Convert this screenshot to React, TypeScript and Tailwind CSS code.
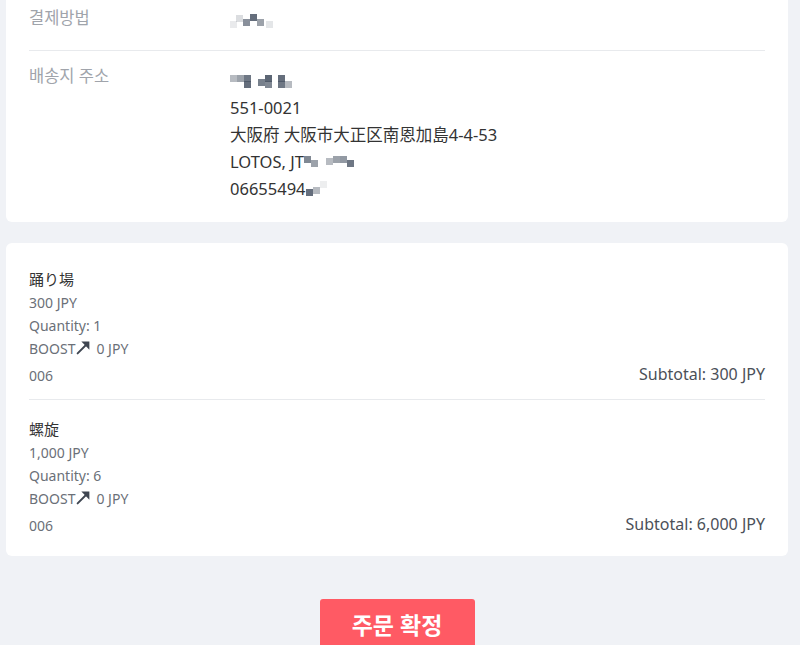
const FONT = { fontFamily: '"Noto Sans", "Noto Sans CJK KR", "Noto Sans CJK JP", sans-serif' }

// pixelated blur blocks, as in the screenshot
function Mosaic({ cells, size = 7 }: { cells: [number, number, number][]; size?: number }) {
  return (
    <span className="relative inline-block align-middle h-[16px]" style={{ width: Math.max(...cells.map((c) => c[0] + size)) }}>
      {cells.map(([x, y, o], i) => (
        <span key={i} className="absolute bg-gray-600" style={{ left: x, top: y, width: size, height: size, opacity: o }} />
      ))}
    </span>
  )
}

function BoostArrow() {
  return (
    <svg width="15" height="15" viewBox="0 0 14 14" className="inline-block ml-[1px] mr-[5px] -mt-[3px]">
      <path d="M1.5 12.5 L10 4" stroke="#3f4651" strokeWidth="1.8" strokeLinecap="round" />
      <path d="M5 1.5 L12.5 1.5 L12.5 9 Z" fill="#3f4651" />
    </svg>
  )
}

const ITEMS = [
  { name: '踊り場', price: '300 JPY', qty: 1, code: '006', subtotal: '300 JPY' },
  { name: '螺旋', price: '1,000 JPY', qty: 6, code: '006', subtotal: '6,000 JPY' },
]

export default function App() {
  return (
    <div className="min-h-[645px] bg-[#f0f2f6] pl-[6px] pr-[12px] text-[#333]" style={FONT}>
      <div className="bg-white rounded-b-md px-[23px] pt-[7px] pb-[20px]">
        <div className="flex pb-[20px] border-b border-[#e8eaed]">
          <div className="w-[201px] shrink-0 text-[16.5px] leading-[22px] text-[#a0a4ab]">결제방법</div>
          <div className="leading-[22px] pt-[1px]">
            <Mosaic cells={[[6, 2, 0.2], [13, 6, 0.65], [20, 1, 0.85], [27, 6, 0.55], [0, 8, 0.12], [36, 8, 0.15]]} />
          </div>
        </div>
        <div className="flex pt-[14px]">
          <div className="w-[201px] shrink-0 text-[16.5px] leading-[22px] text-[#a0a4ab]">배송지 주소</div>
          <div className="text-[16.5px] leading-[27px] text-[#333] pt-[2px]">
            <div className="h-[27px] flex items-center">
              <Mosaic cells={[[0, 2, 0.4], [7, 2, 0.55], [14, 2, 0.8], [14, 8, 0.85], [28, 6, 0.75], [35, 2, 0.9], [35, 8, 0.7], [48, 2, 0.85], [48, 8, 0.8], [55, 8, 0.4]]} />
            </div>
            <div>551-0021</div>
            <div>大阪府 大阪市大正区南恩加島4-4-53</div>
            <div className="flex items-center">
              LOTOS, JT
              <Mosaic cells={[[0, 2, 0.7], [7, 6, 0.55], [22, 4, 0.4], [29, 2, 0.55], [36, 2, 0.6], [43, 6, 0.8]]} />
            </div>
            <div className="flex items-center">
              06655494
              <Mosaic cells={[[0, 8, 0.85], [7, 6, 0.4], [14, 0, 0.1]]} />
            </div>
          </div>
        </div>
      </div>

      <div className="mt-[21px] bg-white rounded-md px-[23px] pt-[7px] pb-[7px]">
        {ITEMS.map((it, i) => (
          <div key={i} className={`flex items-end justify-between pt-[17px] pb-[13px] ${i === 0 ? 'border-b border-[#e8eaed]' : ''}`}>
            <div>
              <div className="text-[15px] leading-[24px] text-[#333]">{it.name}</div>
              <div className="text-[14px] leading-[23px] text-[#6b7078]">
                <div>{it.price}</div>
                <div>Quantity: {it.qty}</div>
                <div className="flex items-center">BOOST<BoostArrow />0 JPY</div>
              </div>
              <div className="mt-[6px] text-[14px] leading-[20px] text-[#6b7078]">{it.code}</div>
            </div>
            <div className="text-[16px] leading-[24px] text-[#4b5058]">Subtotal: {it.subtotal}</div>
          </div>
        ))}
      </div>

      <div className="flex justify-center pt-[43px]">
        <button className="w-[155px] h-[52px] rounded-[3px] bg-[#ff5a64] text-white text-[23px] font-bold">
          주문 확정
        </button>
      </div>
    </div>
  )
}
